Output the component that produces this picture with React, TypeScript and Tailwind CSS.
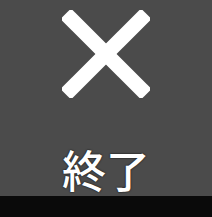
export default function App() {
  return (
    <div className="w-[212px] h-[217px] flex flex-col bg-[#0a0a0a]">
      <div className="h-[196px] bg-[#4b4b4b] flex flex-col items-center">
        <svg className="mt-[10px]" width="88" height="88" viewBox="0 0 88 88">
          <g stroke="#ffffff" strokeWidth="15" strokeLinecap="square" style={{ filter: "blur(0.6px)" }}>
            <line x1="9" y1="9" x2="79" y2="79" />
            <line x1="79" y1="9" x2="9" y2="79" />
          </g>
        </svg>
        <div
          className="mt-[47px] text-[44px] leading-[48px] font-medium text-white [text-shadow:0_0_2px_#000]"
          style={{ fontFamily: '"Noto Sans CJK JP", "Noto Sans", sans-serif' }}
        >
          終了
        </div>
      </div>
    </div>
  );
}
